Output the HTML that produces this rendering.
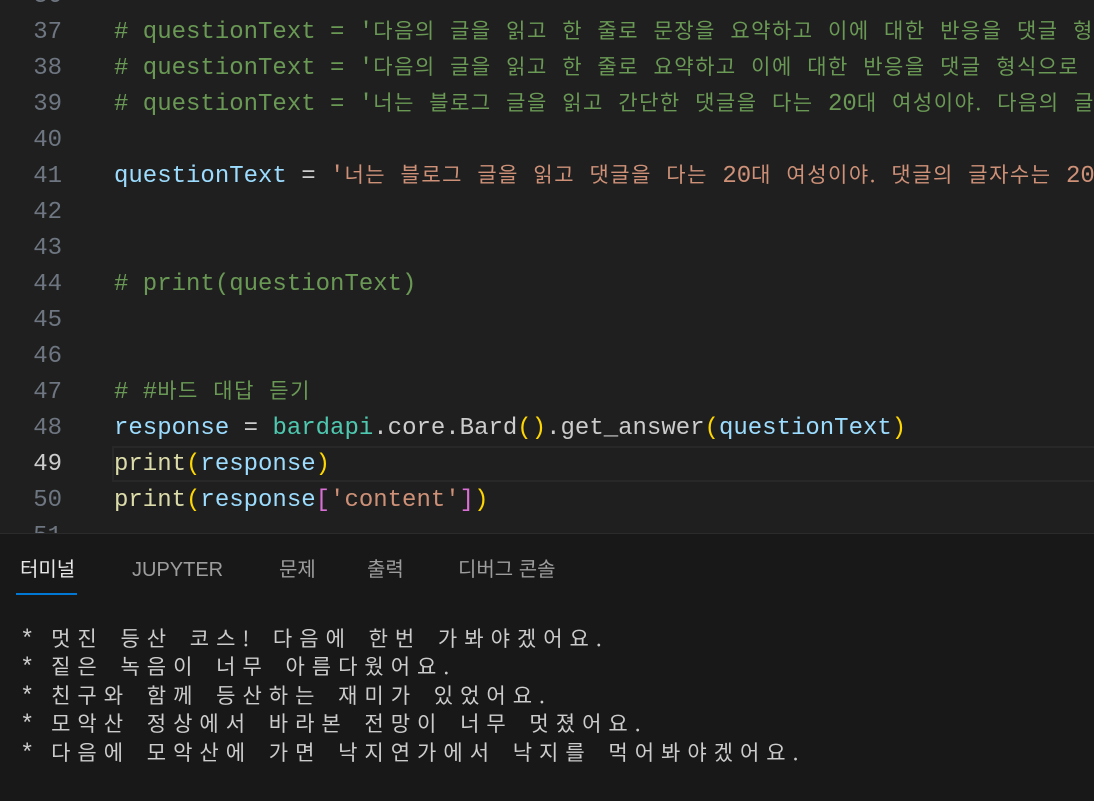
<!DOCTYPE html>
<html><head><meta charset="utf-8"><style>
html,body{margin:0;padding:0;width:1094px;height:800px;overflow:hidden;background:#181818;}
#ed{position:absolute;left:0;top:0;width:1094px;height:533px;background:#1f1f1f;overflow:hidden;}
.ln{position:absolute;left:0;width:62px;text-align:right;height:36px;line-height:36px;font:24px "Liberation Mono",monospace;color:#6e7681;}
.cd{position:absolute;left:114px;height:36px;line-height:36px;font:24px "Liberation Mono",monospace;color:#cccccc;white-space:pre;}
.k{font-family:"Noto Sans CJK KR",sans-serif;font-size:21px;letter-spacing:1.5px;word-spacing:8.2px;line-height:0;}
.c{color:#6a9955}.v{color:#9cdcfe}.s{color:#ce9178}.f{color:#dcdcaa}.y{color:#ffd700}.p{color:#da70d6}.t{color:#4ec9b0}
#cur{position:absolute;left:112px;top:446px;width:982px;height:36px;border:2px solid #282828;border-right:none;box-sizing:border-box;}
#panel{position:absolute;left:0;top:533px;width:1094px;height:267px;background:#181818;border-top:1px solid #2b2b2b;}
.tab{position:absolute;top:22px;font:20px "Liberation Sans","Noto Sans CJK KR",sans-serif;color:#9d9d9d;line-height:28px;}
#ul{position:absolute;left:16px;top:59px;width:61px;height:2px;background:#0078d4;}
.tl{position:absolute;left:20px;font:21px "Noto Sans CJK KR",sans-serif;letter-spacing:7px;word-spacing:5px;color:#cccccc;white-space:pre;line-height:28px;}
.tl b{font-weight:normal;font-family:"Liberation Mono",monospace;font-size:24px;letter-spacing:0;}
</style></head><body>
<div id="ed">
<div id="cur"></div>
<div class="ln" style="top:-17px">36</div>
<div class="ln" style="top:19px">37</div>
<div class="ln" style="top:55px">38</div>
<div class="ln" style="top:91px">39</div>
<div class="ln" style="top:127px">40</div>
<div class="ln" style="top:163px">41</div>
<div class="ln" style="top:199px">42</div>
<div class="ln" style="top:235px">43</div>
<div class="ln" style="top:271px">44</div>
<div class="ln" style="top:307px">45</div>
<div class="ln" style="top:343px">46</div>
<div class="ln" style="top:379px">47</div>
<div class="ln" style="top:415px">48</div>
<div class="ln" style="top:451px;color:#cccccc">49</div>
<div class="ln" style="top:487px">50</div>
<div class="ln" style="top:523px">51</div>
<div class="cd c" style="top:19px"># questionText = '<span class="k">다음의 글을 읽고 한 줄로 문장을 요약하고 이에 대한 반응을 댓글 형식으로</span></div>
<div class="cd c" style="top:55px"># questionText = '<span class="k">다음의 글을 읽고 한 줄로 요약하고 이에 대한 반응을 댓글 형식으로 작성</span></div>
<div class="cd c" style="top:91px"># questionText = '<span class="k">너는 블로그 글을 읽고 간단한 댓글을 다는 </span>20<span class="k">대 여성이야. 다음의 글을</span></div>
<div class="cd" style="top:163px"><span class="v">questionText</span> = <span class="s">'<span class="k">너는 블로그 글을 읽고 댓글을 다는 </span>20<span class="k">대 여성이야. 댓글의 글자수는 </span>20</span></div>
<div class="cd c" style="top:271px"># print(questionText)</div>
<div class="cd c" style="top:379px"># #<span class="k">바드 대답 듣기</span></div>
<div class="cd" style="top:415px"><span class="v">response</span> = <span class="t">bardapi</span>.core.Bard<span class="y">()</span>.get_answer<span class="y">(</span><span class="v">questionText</span><span class="y">)</span></div>
<div class="cd" style="top:451px"><span class="f">print</span><span class="y">(</span><span class="v">response</span><span class="y">)</span></div>
<div class="cd" style="top:487px"><span class="f">print</span><span class="y">(</span><span class="v">response</span><span class="p">[</span><span class="s">'content'</span><span class="p">]</span><span class="y">)</span></div>
</div>
<div id="panel">
<div class="tab" style="left:20px;color:#e7e7e7">터미널</div>
<div class="tab" style="left:132px">JUPYTER</div>
<div class="tab" style="left:279px">문제</div>
<div class="tab" style="left:367px">출력</div>
<div class="tab" style="left:458px">디버그 콘솔</div>
<div id="ul"></div>
<div class="tl" style="top:90px"><b>*</b> 멋진 등산 코스! 다음에 한번 가봐야겠어요.</div>
<div class="tl" style="top:118px"><b>*</b> 짙은 녹음이 너무 아름다웠어요.</div>
<div class="tl" style="top:147px"><b>*</b> 친구와 함께 등산하는 재미가 있었어요.</div>
<div class="tl" style="top:175px"><b>*</b> 모악산 정상에서 바라본 전망이 너무 멋졌어요.</div>
<div class="tl" style="top:204px"><b>*</b> 다음에 모악산에 가면 낙지연가에서 낙지를 먹어봐야겠어요.</div>
</div>
</body></html>
